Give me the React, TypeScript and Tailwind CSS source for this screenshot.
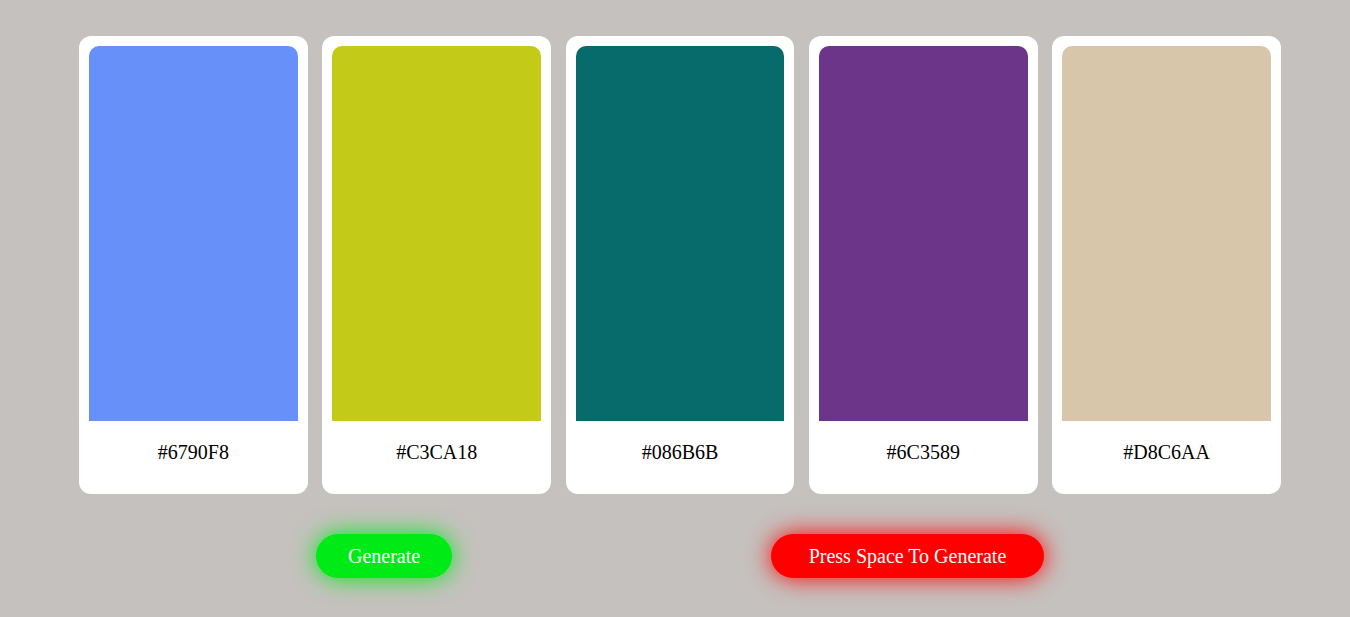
const colors = ['#6790F8', '#C3CA18', '#086B6B', '#6C3589', '#D8C6AA']

function ColorCard({ hex }: { hex: string }) {
  return (
    <div className="bg-white rounded-[12px] p-[10px] flex flex-col">
      <div className="h-[375px] rounded-t-[10px]" style={{ backgroundColor: hex }} />
      <p className="my-5 text-center text-[20px] leading-[23px] text-black">{hex}</p>
    </div>
  )
}

export default function App() {
  return (
    <div
      className="min-h-[617px] bg-[#c5c1be] pt-[36px]"
      style={{ fontFamily: '"Liberation Serif", "Times New Roman", serif' }}
    >
      <div className="ml-[79px] w-[1202px] grid grid-cols-5 gap-[14.5px]">
        {colors.map((c) => (
          <ColorCard key={c} hex={c} />
        ))}
      </div>

      <div className="mt-[40px] flex items-center pl-[316px] gap-[319px]">
        <button className="bg-[#00ea16] text-white text-[20px] leading-[23px] px-8 py-[10.5px] rounded-[22px] shadow-[0_0_24px_#00ea16]">
          Generate
        </button>
        <button className="bg-[#ff0000] text-white text-[20px] leading-[23px] px-[37.5px] py-[10.5px] rounded-[22px] shadow-[0_0_24px_#ff0000]">
          Press Space To Generate
        </button>
      </div>
    </div>
  )
}
